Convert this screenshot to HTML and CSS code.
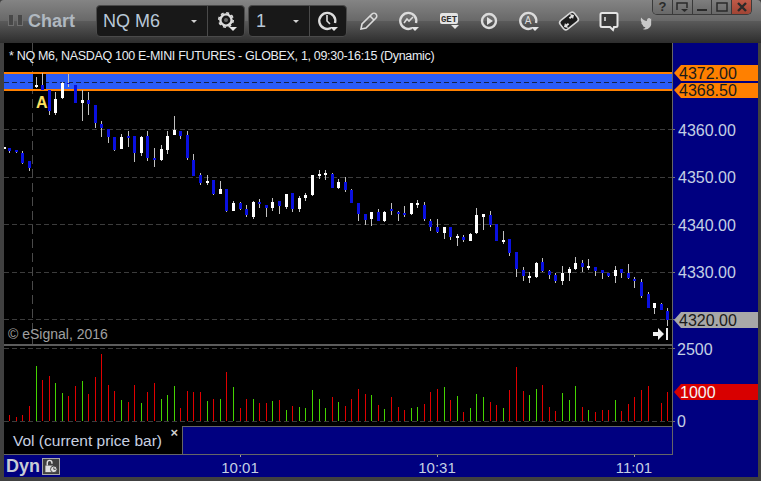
FILE: index.html
```html
<!DOCTYPE html>
<html lang="en">
<head>
<meta charset="utf-8">
<title>Chart</title>
<link rel="stylesheet" href="styles.css">
</head>
<body>
<div class="window">
  <header class="toolbar">
    <div class="grip"><span></span><span></span></div>
    <div class="title">Chart</div>
    <div class="combo combo-symbol">
      <div class="combo-field"><span>NQ M6</span><i class="caret"></i></div>
      <div class="combo-btn">
        <svg class="icon" viewBox="0 0 24 24"><circle class="gear-teeth" cx="12" cy="11" r="7.200"/><circle class="ln" cx="12" cy="11" r="5.600"/><circle class="gear-hub" cx="12" cy="11" r="2"/><path class="fl" d="M15 18h8l-4 4z"/></svg>
      </div>
    </div>
    <div class="combo combo-interval">
      <div class="combo-field"><span>1</span><i class="caret"></i></div>
      <div class="combo-btn">
        <svg class="icon" viewBox="0 0 24 24"><path class="ln" d="M15 19a8 8 0 1 1 4-5"/><path class="ln thin" d="M11 6v6l3 3"/><path class="fl" d="M14 18h8l-4 4z"/></svg>
      </div>
    </div>
    <div class="tools">
      <div class="tool"><svg class="icon" viewBox="0 0 24 24"><path class="ln thin" d="M4 20l1-5L15 5c1-1 3-1 4 0s1 3 0 4L9 19z"/><path class="ln thin" d="M13 7l4 4"/></svg></div>
      <div class="tool"><svg class="icon" viewBox="0 0 24 24"><path class="ln" d="M15 19a8 8 0 1 1 4-5"/><path class="ln thin" d="M7 14l3-4 2 2 4-4"/><path class="fl" d="M14 18h8l-4 4z"/></svg></div>
      <div class="tool"><svg class="icon" viewBox="0 0 24 24"><rect class="fl" x="3" y="4" width="18" height="11" rx="2"/><text class="get" x="12" y="13">GET</text><path class="fl" d="M14 16h8l-4 4z"/></svg></div>
      <div class="tool"><svg class="icon" viewBox="0 0 24 24"><circle class="ln" cx="12" cy="12" r="7"/><path class="fl" d="M10 8l6 4-6 4z"/></svg></div>
      <div class="tool"><svg class="icon" viewBox="0 0 24 24"><path class="ln" d="M15 19a8 8 0 1 1 4-5"/><text class="circle-a" x="11" y="15">A</text><path class="fl" d="M14 18h8l-4 4z"/></svg></div>
      <div class="tool"><svg class="icon" viewBox="0 0 24 24"><rect class="pill" x="3" y="6.500" width="18" height="11" rx="3" transform="rotate(-38 12 12)"/><path class="fl" d="M13 5l4 1-1 4-1-1.500-2 1.500-1.200-1.500 2-1.500zM11 19l-4-1 1-4 1 1.500 2-1.500 1.200 1.500-2 1.500z"/></svg></div>
      <div class="tool"><svg class="icon" viewBox="0 0 24 24"><path class="bubble" d="M5 4h14a1.500 1.500 0 0 1 1.500 1.500v11a1.500 1.500 0 0 1-1.500 1.500h-2l-1 3-3-3H5a1.500 1.500 0 0 1-1.500-1.500v-11A1.500 1.500 0 0 1 5 4z"/><path class="ln thin" d="M8 8v4"/></svg></div>
      <div class="tool"><svg class="icon-bird" viewBox="0 0 24 24"><path class="bird" d="M6 5c2 3 5 5 8 5 0-3 2-5 4-4l1 1 1-1v9c-1 4-5 7-10 7l-2-1c2 0 3-1 4-2-2-.500-3-1-4-3h1c-2-1-3-3-3-4l1 .500C5 10 5 7 6 5z"/></svg></div>
    </div>
    <div class="caption">
      <button class="cap-btn"><span class="cap-text">?</span></button>
      <button class="cap-btn"><svg class="cap-icon" viewBox="0 0 14 12"><path class="cap-ln" d="M2 9V2h10v5"/><path class="cap-fl" d="M6 8h7l-3.500 3z"/></svg></button>
      <button class="cap-btn"><svg class="cap-icon" viewBox="0 0 14 12"><path class="cap-fl" d="M2 8h10v2H2z"/></svg></button>
      <button class="cap-btn"><svg class="cap-icon" viewBox="0 0 14 12"><path class="cap-ln" d="M2 2h10v8H2z"/></svg></button>
      <button class="cap-btn cap-close"><svg class="cap-icon" viewBox="0 0 14 12"><path class="cap-x" d="M3 2l8 8M11 2l-8 8"/></svg></button>
    </div>
  </header>

  <main class="workspace">
    <svg class="pane-price" viewBox="4 43 668 301">
      <path class="grid" d="M4 129.500H672M4 177.500H672M4 224.500H672M4 272.500H672M4 319.500H672"/>
      <path class="cursor" d="M32.500 43V344"/>
      <text class="study-title" x="9" y="60">* NQ M6, NASDAQ 100 E-MINI FUTURES - GLOBEX, 1, 09:30-16:15 (Dynamic)</text>
      <rect class="band" x="4" y="73" width="668" height="17"/>
      <path class="band-edge" d="M4 73H672M4 90H672"/>
      <path class="band-mid" d="M4 82.500H672"/>
      <rect class="cursor-box" x="33" y="74" width="13" height="15"/>
      <path class="wick" d="M9.500 148V153M16.500 150V153M22.500 151V164M29.500 161V171M36.500 77V88M42.500 73V90M49.500 90V115M55.500 92V115M62.500 82V99M68.500 74V87M75.500 85V103M82.500 90V121M88.500 92V115M95.500 105V128M101.500 121V137M108.500 129V143M114.500 137V151M121.500 134V149M128.500 131V147M134.500 136V162M141.500 136V156M147.500 131V161M154.500 148V167M161.500 145V161M167.500 131V154M174.500 116V135M180.500 131V139M187.500 131V160M193.500 154V176M200.500 173V185M207.500 175V185M213.500 180V195M220.500 181V194M226.500 189V212M233.500 201V211M240.500 202V210M246.500 205V217M253.500 201V219M259.500 199V208M266.500 205V217M272.500 198V211M279.500 201V214M286.500 194V209M292.500 193V212M299.500 196V212M305.500 193V201M312.500 175V196M319.500 170V179M325.500 170V180M332.500 173V188M338.500 179V189M345.500 177V192M351.500 189V203M358.500 203V221M365.500 214V225M371.500 212V226M378.500 209V221M384.500 211V222M391.500 203V215M398.500 211V221M404.500 206V217M411.500 203V215M417.500 200V208M424.500 202V221M430.500 219V231M437.500 219V233M444.500 227V239M450.500 227V240M457.500 234V246M463.500 235V242M470.500 233V241M476.500 208V234M483.500 214V230M490.500 211V227M496.500 224V241M503.500 231V244M509.500 239V256M516.500 252V277M523.500 267V281M529.500 272V283M536.500 262V278M542.500 258V272M549.500 270V279M555.500 273V283M562.500 266V285M569.500 267V281M575.500 257V270M582.500 260V272M588.500 259V270M595.500 267V276M602.500 270V279M608.500 273V277M615.500 266V283M621.500 269V278M628.500 264V279M634.500 277V288M641.500 279V298M648.500 292V308M654.500 303V314M661.500 303V310M667.500 308V326"/>
      <path class="body-up" d="M4.500 147V149M36.500 85V87M55.500 99V113M62.500 83V98M82.500 100V103M121.500 137V149M141.500 137V153M161.500 149V160M167.500 136V150M174.500 130V135M207.500 181V183M220.500 189V194M233.500 203V211M253.500 202V217M272.500 202V208M286.500 194V207M299.500 198V209M305.500 195V198M312.500 175V195M319.500 174V176M325.500 173V175M338.500 182V188M371.500 212V219M384.500 212V221M411.500 203V214M417.500 203V205M444.500 227V233M457.500 236V238M470.500 234V241M476.500 215V233M483.500 214V217M503.500 240V242M529.500 276V278M536.500 263V277M562.500 273V281M569.500 269V273M575.500 263V269M588.500 266V268M615.500 270V276M654.500 303V308"/>
      <path class="body-down" d="M9.500 148V151M16.500 150V152M22.500 153V163M29.500 161V168M42.500 85V90M49.500 90V111M68.500 83V84M75.500 85V103M88.500 100V104M95.500 105V123M101.500 124V128M108.500 129V137M114.500 137V150M128.500 136V138M134.500 136V153M147.500 136V158M154.500 158V160M180.500 131V136M187.500 135V158M193.500 160V176M200.500 175V183M213.500 180V194M226.500 189V211M240.500 203V209M246.500 209V215M259.500 202V204M266.500 205V208M279.500 201V206M292.500 193V209M332.500 174V188M345.500 182V190M351.500 190V203M358.500 203V214M365.500 214V220M378.500 212V221M391.500 209V211M398.500 212V214M404.500 213V215M424.500 205V219M430.500 221V227M437.500 227V232M450.500 227V237M463.500 237V240M490.500 215V225M496.500 224V241M509.500 239V253M516.500 252V269M523.500 270V276M542.500 262V271M549.500 271V275M555.500 275V281M582.500 263V267M595.500 267V271M602.500 270V273M608.500 273V276M621.500 269V273M628.500 273V278M634.500 279V281M641.500 282V296M648.500 294V308M661.500 304V310M667.500 311V320"/>
      <text class="marker-a" x="36" y="108">A</text>
      <text class="copyright" x="8" y="339">© eSignal, 2016</text>
      <path class="jump" d="M653 332h5v-4l6 6-6 6v-4h-5zM666 328h2v12h-2z"/>
    </svg>
    <div class="axis-rule"></div>
    <svg class="axis-price" viewBox="673 43 85 301">
      <path class="tick" d="M673 129.500h2M673 177.500h2M673 224.500h2M673 272.500h2M673 319.500h2"/>
      <polygon class="tag-orange" points="674,73 681,65 758,65 758,81 681,81"/>
      <polygon class="tag-orange" points="674,90 681,83 758,83 758,98 681,98"/>
      <polygon class="tag-gray" points="674,320 681,312 758,312 758,328 681,328"/>
      <text class="tag-text" x="679" y="79">4372.00</text>
      <text class="tag-text" x="679" y="96">4368.50</text>
      <text class="axis-text" x="678" y="136">4360.00</text>
      <text class="axis-text" x="678" y="183">4350.00</text>
      <text class="axis-text" x="678" y="231">4340.00</text>
      <text class="axis-text" x="678" y="278">4330.00</text>
      <text class="tag-text" x="679" y="326">4320.00</text>
    </svg>
    <div class="separator"></div>
    <svg class="pane-volume" viewBox="4 346 668 80">
      <path class="grid" d="M4 348.500H672M4 421.500H672"/>
      <path class="vol-red" d="M9.500 421V415M16.500 421V417M22.500 421V415M29.500 421V406M42.500 421V380M49.500 421V376M68.500 421V396M75.500 421V386M88.500 421V394M95.500 421V377M101.500 421V354M108.500 421V385M114.500 421V391M128.500 421V402M134.500 421V385M147.500 421V392M154.500 421V383M180.500 421V408M187.500 421V391M193.500 421V392M200.500 421V392M213.500 421V399M226.500 421V372M240.500 421V408M246.500 421V399M259.500 421V403M266.500 421V403M279.500 421V400M292.500 421V406M332.500 421V397M345.500 421V406M351.500 421V399M358.500 421V389M365.500 421V394M378.500 421V405M391.500 421V397M398.500 421V407M404.500 421V410M424.500 421V404M430.500 421V392M437.500 421V389M450.500 421V400M463.500 421V412M490.500 421V402M496.500 421V405M509.500 421V390M516.500 421V367M523.500 421V391M542.500 421V385M549.500 421V407M555.500 421V411M582.500 421V407M595.500 421V412M602.500 421V410M608.500 421V410M621.500 421V411M628.500 421V404M634.500 421V397M641.500 421V390M648.500 421V386M661.500 421V403M667.500 421V392"/>
      <path class="vol-green" d="M36.500 421V366M55.500 421V383M62.500 421V393M82.500 421V381M121.500 421V400M141.500 421V403M161.500 421V399M167.500 421V395M174.500 421V386M207.500 421V401M220.500 421V399M233.500 421V387M253.500 421V399M272.500 421V401M286.500 421V410M299.500 421V407M305.500 421V408M312.500 421V390M319.500 421V399M325.500 421V408M338.500 421V402M371.500 421V395M384.500 421V409M411.500 421V408M417.500 421V407M444.500 421V387M457.500 421V396M470.500 421V408M476.500 421V394M483.500 421V397M503.500 421V408M529.500 421V395M536.500 421V389M562.500 421V393M569.500 421V400M575.500 421V386M588.500 421V410M615.500 421V400"/>
    </svg>
    <svg class="axis-volume" viewBox="673 346 85 80">
      <path class="tick" d="M673 348.500h2M673 421.500h2"/>
      <polygon class="tag-red" points="674,392 681,384 758,384 758,400 681,400"/>
      <text class="axis-text" x="677" y="355">2500</text>
      <text class="tag-text-light" x="680" y="398">1000</text>
      <text class="axis-text" x="677" y="427">0</text>
    </svg>
    <div class="legend">
      <div class="legend-label"><span>Vol (current price bar)</span><span class="legend-close">×</span></div>
      <div class="legend-fill"></div>
    </div>
    <div class="legend-axis"></div>
    <div class="timebar">
      <div class="status">
        <span class="dyn">Dyn</span>
        <div class="lock"><svg viewBox="0 0 16 16"><path class="lock-ln" d="M4 7V4a2.500 2.500 0 0 1 5 0v1"/><rect class="lock-fl" x="2" y="7" width="8" height="7"/><circle class="lock-clock" cx="11" cy="11" r="3.500"/><path class="lock-hand" d="M11 9v2h2"/></svg></div>
      </div>
      <svg class="time-axis" viewBox="62 455 696 22">
        <path class="tick-time" d="M240.500 455v2M437.500 455v2M634.500 455v2"/>
        <text class="time-text" x="240" y="473">10:01</text>
        <text class="time-text" x="437" y="473">10:31</text>
        <text class="time-text" x="634" y="473">11:01</text>
      </svg>
    </div>
  </main>
</div>
</body>
</html>
```
FILE: styles.css
```css
* { box-sizing: border-box; }
html, body { margin: 0; padding: 0; background: #3c3c3c; }
body { font-family: "Liberation Sans", Arial, sans-serif; overflow: hidden; }

.window {
  width: 761px;
  height: 481px;
  display: flex;
  flex-direction: column;
  background: #404040;
  overflow: hidden;
}

/* toolbar */
.toolbar {
  position: relative;
  height: 43px;
  flex: none;
  display: flex;
  align-items: flex-start;
  padding-top: 5px;
  border-radius: 4px 4px 0 0;
  background: linear-gradient(#848484 0, #686868 21px, #5a5a5a 21px, #2d2d2d 43px);
}
.grip { display: flex; gap: 3px; margin: 9px 0 0 8px; }
.grip span { width: 6px; height: 12px; border: 1px solid #707070; background: #484848; }
.title {
  margin: 4px 0 0 5px;
  width: 68px;
  font-size: 18px;
  line-height: 24px;
  font-weight: 700;
  color: #b0b8c0;
}
.combo {
  display: flex;
  height: 32px;
  border: 1px solid #4a4a4a;
  border-radius: 4px;
  background: #181818;
}
.combo-symbol { width: 149px; }
.combo-interval { width: 99px; margin-left: 3px; }
.combo-field {
  flex: 1;
  display: flex;
  align-items: center;
  justify-content: space-between;
  padding: 0 10px 0 6px;
  font-size: 18px;
  color: #b8c8d8;
  border-right: 1px solid #4a4a4a;
}
.combo-interval .combo-field { padding-left: 7px; }
.caret { width: 0; height: 0; border: 3px solid transparent; border-top: 3px solid #d0d0d0; border-bottom: 0; }
.combo-btn { width: 36px; display: flex; align-items: center; justify-content: center; }
.icon { width: 24px; height: 24px; display: block; }
.icon-bird { width: 17px; height: 17px; display: block; margin: 2px 7px 0 0; }
.tools { display: flex; margin-left: 2px; }
.tool { width: 40px; height: 32px; display: flex; align-items: center; justify-content: center; }

.ln { fill: none; stroke: #dcdcdc; stroke-width: 2.4; }
.thin { stroke-width: 1.6; }
.fl { fill: #e4e4e4; }
.gear-teeth { fill: none; stroke: #dcdcdc; stroke-width: 1.600; stroke-dasharray: 3 2.650; }
.gear-hub { fill: #666; }
.get { font-size: 9px; font-weight: 700; fill: #333; text-anchor: middle; font-family: "Liberation Mono", monospace; }
.circle-a { font-size: 10px; fill: #dcdcdc; text-anchor: middle; }
.pill { fill: #1c1c1c; stroke: #d8d8d8; stroke-width: 1.600; }
.bubble { fill: #3a3a3a; stroke: #e4e4e4; stroke-width: 2; }
.bird { fill: #c8c8c8; }

.caption {
  position: absolute;
  top: 0;
  right: 9px;
  display: flex;
  width: 100px;
  height: 15px;
  border: 1px solid #3a3a3a;
  border-top: 0;
  border-radius: 0 0 5px 5px;
  overflow: hidden;
}
.cap-btn {
  flex: 1;
  padding: 0;
  border: 0;
  border-right: 1px solid #3a3a3a;
  background: linear-gradient(#7e7e7e, #686868);
  display: flex;
  align-items: center;
  justify-content: center;
}
.cap-close { border-right: 0; background: linear-gradient(#c05a48, #a04434); }
.cap-text { font-size: 13px; font-weight: 700; color: #2a2a2a; line-height: 14px; font-family: "Liberation Sans", sans-serif; }
.cap-icon { width: 14px; height: 12px; }
.cap-ln { fill: none; stroke: #2a2a2a; stroke-width: 1.500; }
.cap-fl { fill: #2a2a2a; }
.cap-x { fill: none; stroke: #2a2a2a; stroke-width: 2.400; }

/* chart workspace */
.workspace {
  flex: 1;
  margin: 0 3px 4px 4px;
  display: grid;
  grid-template-columns: 668px 1px 85px;
  grid-template-rows: 301px 2px 80px 29px 22px;
  background: #000080;
}
.workspace svg { display: block; }
.pane-price, .pane-volume { width: 668px; background: #000; }
.pane-price { height: 301px; }
.pane-volume { height: 80px; }
.axis-price { width: 85px; height: 301px; }
.axis-volume { width: 85px; height: 80px; overflow: visible; }
.axis-rule { grid-column: 2; grid-row: 1 / 5; background: #666; }
.pane-price { grid-column: 1; grid-row: 1; }
.axis-price { grid-column: 3; grid-row: 1; }
.separator { grid-column: 1; grid-row: 2; background: #5c5c5c; }
.pane-volume { grid-column: 1; grid-row: 3; }
.axis-volume { grid-column: 3; grid-row: 3; }
.legend {
  grid-column: 1;
  grid-row: 4;
  display: flex;
  border-bottom: 1px solid #666;
}
.legend-label {
  width: 179px;
  display: flex;
  justify-content: space-between;
  padding: 6px 4px 0 9px;
  background: #000;
  border-right: 1px solid #666;
  font-size: 15.500px;
  line-height: 18px;
  color: #c8d0e0;
}
.legend-close { font-size: 13px; line-height: 10px; font-weight: 700; margin-top: -4px; color: #d0d0d0; }
.legend-fill { flex: 1; border-top: 1px solid #666; }
.legend-axis { grid-column: 3; grid-row: 4; }
.timebar { grid-column: 1 / 4; grid-row: 5; display: flex; }
.status { width: 58px; display: flex; align-items: center; gap: 2px; padding-left: 2px; }
.dyn { font-size: 18px; font-weight: 700; color: #c8ccd4; line-height: 22px; }
.lock { width: 18px; height: 17px; border: 1px solid #a8a8a8; background: #404040; }
.lock svg { width: 16px; height: 15px; }
.lock-ln { fill: none; stroke: #e0e0e0; stroke-width: 1.500; }
.lock-fl { fill: #e0e0e0; }
.lock-clock { fill: #e0e0e0; stroke: #404040; stroke-width: 1; }
.lock-hand { fill: none; stroke: #404040; stroke-width: 1; }
.time-axis { width: 696px; height: 22px; }

/* chart drawing */
.grid { fill: none; stroke: #3c3c3c; stroke-width: 1; stroke-dasharray: 5 3; shape-rendering: crispEdges; }
.cursor { fill: none; stroke: #4a4a4a; stroke-width: 1; stroke-dasharray: 9 5; shape-rendering: crispEdges; }
.study-title { font-size: 12.500px; letter-spacing: -0.320px; fill: #e8ecf0; }
.band { fill: #2a5cf8; }
.band-edge { fill: none; stroke: #ff8000; stroke-width: 2; shape-rendering: crispEdges; }
.band-mid { fill: none; stroke: #16244c; stroke-width: 1; stroke-dasharray: 5 3; shape-rendering: crispEdges; }
.cursor-box { fill: #000; }
.wick { fill: none; stroke: #c0c0c0; stroke-width: 1; shape-rendering: crispEdges; }
.body-up { fill: none; stroke: #fff; stroke-width: 3; shape-rendering: crispEdges; }
.body-down { fill: none; stroke: #0a10e0; stroke-width: 3; shape-rendering: crispEdges; }
.marker-a { font-size: 16px; font-weight: 700; fill: #ffe060; }
.copyright { font-size: 14px; fill: #a0a0a0; }
.jump { fill: #f0f0f0; }
.vol-red { fill: none; stroke: #e00000; stroke-width: 1; shape-rendering: crispEdges; }
.vol-green { fill: none; stroke: #44d400; stroke-width: 1; shape-rendering: crispEdges; }
.tick { fill: none; stroke: #777; stroke-width: 1; shape-rendering: crispEdges; }
.tick-time { fill: none; stroke: #999; stroke-width: 1; shape-rendering: crispEdges; }
.tag-orange { fill: #ff8000; }
.tag-gray { fill: #a8a8a8; }
.tag-red { fill: #d80000; }
.tag-text { font-size: 16px; fill: #1a1a1a; }
.tag-text-light { font-size: 16px; fill: #f4f4f4; }
.axis-text { font-size: 16px; fill: #c4d0e4; }
.time-text { font-size: 15px; fill: #c4d0e4; text-anchor: middle; }
```
